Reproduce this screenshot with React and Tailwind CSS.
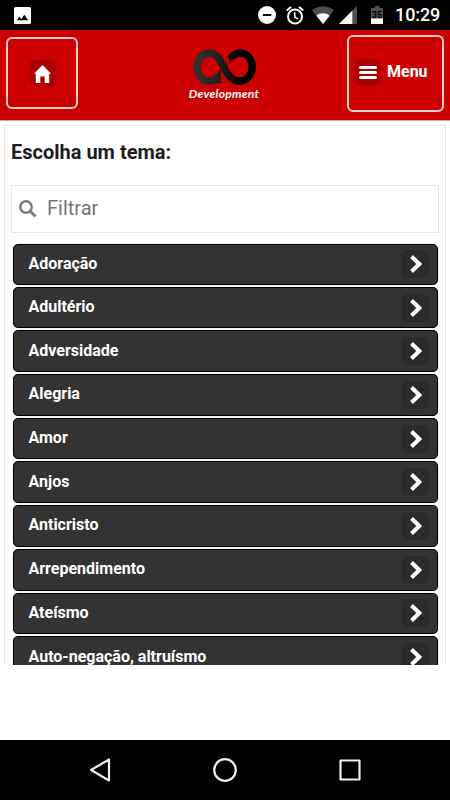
import React from "react";

const THEMES = [
  "Adoração",
  "Adultério",
  "Adversidade",
  "Alegria",
  "Amor",
  "Anjos",
  "Anticristo",
  "Arrependimento",
  "Ateísmo",
  "Auto-negação, altruísmo",
];

// --- STATUS BAR ---
const StatusBar = () => (
  <div className="flex h-[30px] shrink-0 items-center bg-black pl-3.5 pr-[10px] text-white">
    <svg width="17" height="17" viewBox="0 0 17 17" className="block">
      <rect width="17" height="17" rx="1.5" fill="#fff" />
      <path d="M2.8 13.2l2.6-3.6 2 2.3 2.9-4.1 3.9 5.4z" fill="#000" />
    </svg>
    <div className="ml-auto flex items-center">
      <svg width="18" height="18" viewBox="0 0 18 18">
        <circle cx="9" cy="9" r="9" fill="#fff" />
        <path d="M4.8 9h8.4" stroke="#000" strokeWidth="2" />
      </svg>
      <svg width="18" height="19" viewBox="0 0 18 19" className="ml-[10px]" fill="none" stroke="#fff">
        <circle cx="9" cy="10.5" r="7" strokeWidth="2" />
        <path d="M.7 4.5L5 1M17.3 4.5L13 1" strokeWidth="2" />
        <path d="M8.8 6.2v4.9l3.4 2.1" strokeWidth="1.5" />
      </svg>
      <svg width="22" height="18" viewBox="0 0 22 18" className="ml-[8px]">
        <path d="M0 4.3C6.3-1 15.7-1 22 4.3L11 18z" fill="#4d4d4d" />
        <path d="M4.4 9.7c3.8-3.2 9.4-3.2 13.2 0L11 18z" fill="#fff" />
      </svg>
      <svg width="18" height="18" viewBox="0 0 18 18" className="ml-[5px]">
        <path d="M0 18L18 0v18z" fill="#4d4d4d" />
        <path d="M0 18L13.3 4.7V18z" fill="#fff" />
      </svg>
      <svg width="12" height="18" viewBox="0 0 12 18" className="ml-[14px]">
        <path d="M3.5 0h5v2H12v16H0V2h3.5z" fill="#4d4d4d" />
        <path d="M0 12.5h12V18H0z" fill="#fff" />
        <text x="6" y="11.7" textAnchor="middle" fontSize="8.5" fontWeight="700" fill="#000">35</text>
      </svg>
      <span className="ml-[12px] w-[45px] whitespace-nowrap text-[18px] font-medium leading-[30px] tracking-[-0.1px]">10:29</span>
    </div>
  </div>
);

// --- LOGO ---
const Logo = () => (
  <div className="flex flex-col items-center pt-[19px]">
    <svg width="64" height="36" viewBox="129 57 192 108" fill="none" className="ml-0.5">
      <defs>
        <linearGradient id="loop" gradientUnits="userSpaceOnUse" x1="130" y1="0" x2="275" y2="0">
          <stop offset="0" stopColor="#393131" />
          <stop offset="0.5" stopColor="#252121" />
          <stop offset="1" stopColor="#000" />
        </linearGradient>
      </defs>
      <path
        d="M203 140C196 149 188 153.5 176 153.5C156 153.5 141.5 134 141.5 111C141.5 88 158 69 178 69C200 69 210 90 221 111C232 135 246 153.5 268 153.5C289 153.5 307 134 307 111C307 88 291 69 270 69C259 69 251 74 246 81"
        stroke="url(#loop)"
        strokeWidth="22.5"
      />
      <path d="M213 114V160L194 160L195 134Q206 128 213 114Z" fill="url(#loop)" />
      <path d="M233 77L239 100Q245 90 255 86L244 68Z" fill="url(#loop)" />
    </svg>
    <span className="mt-[1px] font-[Lato,sans-serif] text-[12px] font-bold italic leading-4 tracking-[0.25px] text-white">Development</span>
  </div>
);

// --- HEADER ---
const Header = () => (
  <header className="flex h-[91px] shrink-0 items-start justify-between border-b border-[#ec9999] bg-[#cc0000] px-1.5">
    <button className="mt-[7px] flex h-[72px] w-[72px] items-center justify-center rounded-md border-2 border-white/80 pt-[1px]">
      <span className="flex h-[27px] w-[27px] items-center justify-center rounded-md bg-[#ad0000]">
        <svg width="17" height="18" viewBox="0 0 17 18">
          <path d="M8.5 0L17 8.7h-1.8V18h-4.5v-6.4H6.3V18H1.8V8.7H0z" fill="#fff" />
        </svg>
      </span>
    </button>
    <div className="ml-[23px]">
      <Logo />
    </div>
    <button className="mt-[5px] flex h-[77px] w-[97px] items-center rounded-md border-2 border-white/80 pb-[3px] pl-[5px]">
      <span className="flex h-[27px] w-[27px] flex-col items-center justify-center gap-0.5 rounded-md bg-[#ad0000]">
        <span className="h-[3px] w-[18px] rounded-full bg-white" />
        <span className="h-[3px] w-[18px] rounded-full bg-white" />
        <span className="h-[3px] w-[18px] rounded-full bg-white" />
      </span>
      <span className="ml-1.5 text-base font-bold text-white">Menu</span>
    </button>
  </header>
);

const ThemeRow = ({ label }) => (
  <li className="flex h-[43.7px] shrink-0 pb-[2px] first:h-[42.7px]">
    <a className="flex flex-1 items-center justify-between rounded-[5px] border border-black bg-[#333] pl-[15px] pr-2 shadow-[0_0_1px_#8b979d]">
      <span className="pb-[1px] text-base font-bold text-white">{label}</span>
      <span className="flex h-7 w-7 items-center justify-center rounded-md bg-[#2b2b2b]">
        <svg width="12" height="18" viewBox="0 0 12 18" className="ml-[1px]" fill="none">
          <path d="M1.5 1.5L9.3 9l-7.8 7.5" stroke="#fff" strokeWidth="4" />
        </svg>
      </span>
    </a>
  </li>
);

// --- NAVIGATION BAR ---
const NavBar = () => (
  <div className="mt-auto flex h-[60px] shrink-0 items-center justify-between bg-black px-[88px]">
    <svg width="24" height="24" viewBox="0 0 24 24" fill="none" stroke="#eee" strokeWidth="2.2" strokeLinejoin="round">
      <path d="M3 12L21 1.5v21z" />
    </svg>
    <svg width="24" height="24" viewBox="0 0 24 24" fill="none" stroke="#eee" strokeWidth="2.2">
      <circle cx="12" cy="12" r="10.8" />
    </svg>
    <svg width="24" height="24" viewBox="0 0 24 24" fill="none" stroke="#eee" strokeWidth="2.2" strokeLinejoin="round">
      <path d="M2.5 2.5h19v19h-19z" />
    </svg>
  </div>
);

const App = () => (
  <div className="flex h-[800px] w-[450px] flex-col overflow-hidden bg-white font-[Roboto,sans-serif]">
    <StatusBar />
    <Header />
    <main className="mx-1 mt-1 flex h-[540px] shrink-0 flex-col overflow-hidden border-x border-t border-[#e5e5e5] px-1.5">
      <h1 className="mt-[11px] text-[20px] font-bold leading-[30px] text-[#1d1d1d]">Escolha um tema:</h1>
      <label className="mt-[18px] flex h-[48px] shrink-0 items-center border border-[#e6e6e6] pl-[7px]">
        <svg width="18" height="18" viewBox="0 0 18 18" fill="none" stroke="#7b7b7b">
          <circle cx="7" cy="7" r="5.7" strokeWidth="2.5" />
          <path d="M11.2 11.2l5.3 5.3" strokeWidth="2.8" />
        </svg>
        <input
          placeholder="Filtrar"
          className="ml-2.5 w-64 bg-transparent pb-[2px] text-[20px] outline-none placeholder:text-[#757575]"
        />
      </label>
      <ul className="mt-[11px] flex flex-col pl-[1.5px] pr-[1px]">
        {THEMES.map((label) => (
          <ThemeRow key={label} label={label} />
        ))}
      </ul>
    </main>
    <NavBar />
  </div>
);

export default App;
